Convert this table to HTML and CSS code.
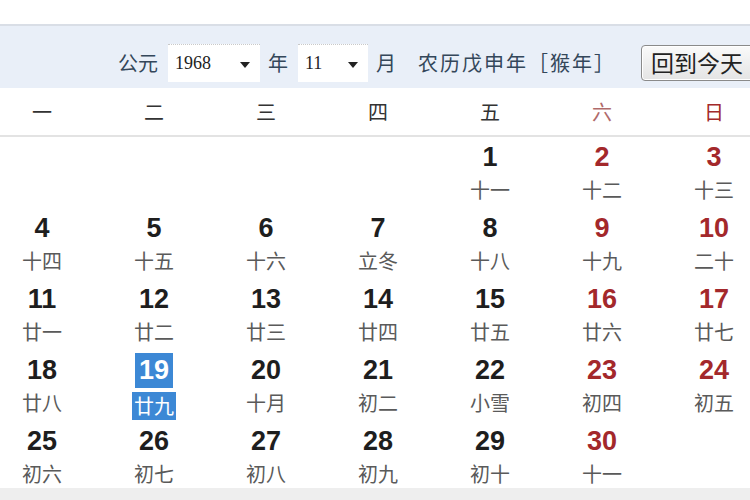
FILE: index.html
```html
<!DOCTYPE html>
<html lang="zh">
<head>
<meta charset="utf-8">
<link rel="stylesheet" href="styles.css">
</head>
<body>
<div class="page">
  <div class="topspace"></div>
  <div class="toolbar">
    <span class="label">公元</span>
    <span class="select sel-year"><span class="val">1968</span><span class="arrow"></span></span>
    <span class="label">年</span>
    <span class="select sel-month"><span class="val">11</span><span class="arrow"></span></span>
    <span class="label">月</span>
    <span class="label lunar-year">农历戊申年［猴年］</span>
    <span class="btn">回到今天</span>
  </div>
  <div class="weekdays">
    <div class="wd">一</div><div class="wd">二</div><div class="wd">三</div><div class="wd">四</div><div class="wd">五</div><div class="wd sat">六</div><div class="wd sun">日</div>
  </div>
  <div class="days">
    <div class="cell"></div><div class="cell"></div><div class="cell"></div><div class="cell"></div>
    <div class="cell"><div class="num">1</div><div class="lun">十一</div></div>
    <div class="cell we"><div class="num">2</div><div class="lun">十二</div></div>
    <div class="cell we"><div class="num">3</div><div class="lun">十三</div></div>

    <div class="cell"><div class="num">4</div><div class="lun">十四</div></div>
    <div class="cell"><div class="num">5</div><div class="lun">十五</div></div>
    <div class="cell"><div class="num">6</div><div class="lun">十六</div></div>
    <div class="cell"><div class="num">7</div><div class="lun">立冬</div></div>
    <div class="cell"><div class="num">8</div><div class="lun">十八</div></div>
    <div class="cell we"><div class="num">9</div><div class="lun">十九</div></div>
    <div class="cell we"><div class="num">10</div><div class="lun">二十</div></div>

    <div class="cell"><div class="num">11</div><div class="lun">廿一</div></div>
    <div class="cell"><div class="num">12</div><div class="lun">廿二</div></div>
    <div class="cell"><div class="num">13</div><div class="lun">廿三</div></div>
    <div class="cell"><div class="num">14</div><div class="lun">廿四</div></div>
    <div class="cell"><div class="num">15</div><div class="lun">廿五</div></div>
    <div class="cell we"><div class="num">16</div><div class="lun">廿六</div></div>
    <div class="cell we"><div class="num">17</div><div class="lun">廿七</div></div>

    <div class="cell"><div class="num">18</div><div class="lun">廿八</div></div>
    <div class="cell today"><div class="num"><span>19</span></div><div class="lun"><span>廿九</span></div></div>
    <div class="cell"><div class="num">20</div><div class="lun">十月</div></div>
    <div class="cell"><div class="num">21</div><div class="lun">初二</div></div>
    <div class="cell"><div class="num">22</div><div class="lun">小雪</div></div>
    <div class="cell we"><div class="num">23</div><div class="lun">初四</div></div>
    <div class="cell we"><div class="num">24</div><div class="lun">初五</div></div>

    <div class="cell"><div class="num">25</div><div class="lun">初六</div></div>
    <div class="cell"><div class="num">26</div><div class="lun">初七</div></div>
    <div class="cell"><div class="num">27</div><div class="lun">初八</div></div>
    <div class="cell"><div class="num">28</div><div class="lun">初九</div></div>
    <div class="cell"><div class="num">29</div><div class="lun">初十</div></div>
    <div class="cell we"><div class="num">30</div><div class="lun">十一</div></div>
    <div class="cell"></div>
  </div>
  <div class="footer"></div>
</div>
</body>
</html>
```

FILE: styles.css
```css
html, body {
  margin: 0;
  padding: 0;
  background: #ffffff;
  overflow: hidden;
}
body {
  width: 750px;
  height: 500px;
  font-family: "Noto Sans CJK SC", "Liberation Sans", sans-serif;
}
.page {
  width: 750px;
  height: 500px;
  overflow: hidden;
}
.topspace {
  height: 24px;
  background: #ffffff;
  border-bottom: 2px solid #d9dee6;
}
.toolbar {
  height: 62px;
  box-sizing: border-box;
  padding-top: 12px;
  padding-left: 118px;
  background: #e9eff8;
  display: flex;
  align-items: center;
  white-space: nowrap;
}
.label {
  font-size: 20px;
  line-height: 38px;
  color: #34475a;
  flex-shrink: 0;
}
.select {
  display: flex;
  align-items: center;
  height: 38px;
  box-sizing: border-box;
  background: #ffffff;
  border-top: 1px dotted #c9c9c9;
  margin: 0 8px 0 10px;
  flex-shrink: 0;
}
.sel-year { width: 92px; }
.sel-month { width: 70px; }
.val {
  font-family: "Liberation Serif", serif;
  font-size: 18px;
  color: #222;
  padding-left: 7px;
  flex: 1;
}
.arrow {
  width: 0;
  height: 0;
  border-left: 5px solid transparent;
  border-right: 5px solid transparent;
  border-top: 6px solid #222;
  margin-right: 10px;
  margin-top: 2px;
}
.lunar-year {
  margin-left: 22px;
  letter-spacing: 2px;
}
.btn {
  flex-shrink: 0;
  margin-left: 25px;
  height: 36px;
  box-sizing: border-box;
  border: 1px solid #8a8a8a;
  border-radius: 4px;
  background: linear-gradient(#fafafa, #e4e4e4);
  box-shadow: inset 0 0 0 1px #ffffff;
  font-size: 23px;
  line-height: 33px;
  padding: 0 14px 0 9px;
  color: #222;
}
.weekdays {
  display: grid;
  grid-template-columns: repeat(7, 112px);
  margin-left: -14px;
  height: 47px;
  border-bottom: 2px solid #e3e3e3;
}
.wd {
  text-align: center;
  font-size: 20px;
  line-height: 47px;
  color: #333;
}
.wd.sat { color: #b06a6a; }
.wd.sun { color: #a32a2a; }
.days {
  display: grid;
  grid-template-columns: repeat(7, 112px);
  grid-auto-rows: 71px;
  margin-left: -14px;
}
.cell {
  text-align: center;
  padding-top: 5px;
  box-sizing: border-box;
}
.num {
  font-family: "Liberation Sans", Arial, sans-serif;
  font-weight: bold;
  font-size: 27px;
  line-height: 30px;
  color: #1e1e1e;
}
.lun {
  font-size: 20px;
  line-height: 36px;
  color: #5a5a5a;
}
.we .num { color: #a3282b; }
.today .num span {
  display: inline-block;
  background: #3c88d5;
  color: #ffffff;
  padding: 2px 4px;
  line-height: 31px;
  margin-top: -2px;
}
.today .lun span {
  display: inline-block;
  background: #3c88d5;
  color: #ffffff;
  line-height: 28px;
  padding: 0 2px;
}
.footer {
  height: 16px;
  margin-top: -4px;
  background: #eeeeee;
}
```
